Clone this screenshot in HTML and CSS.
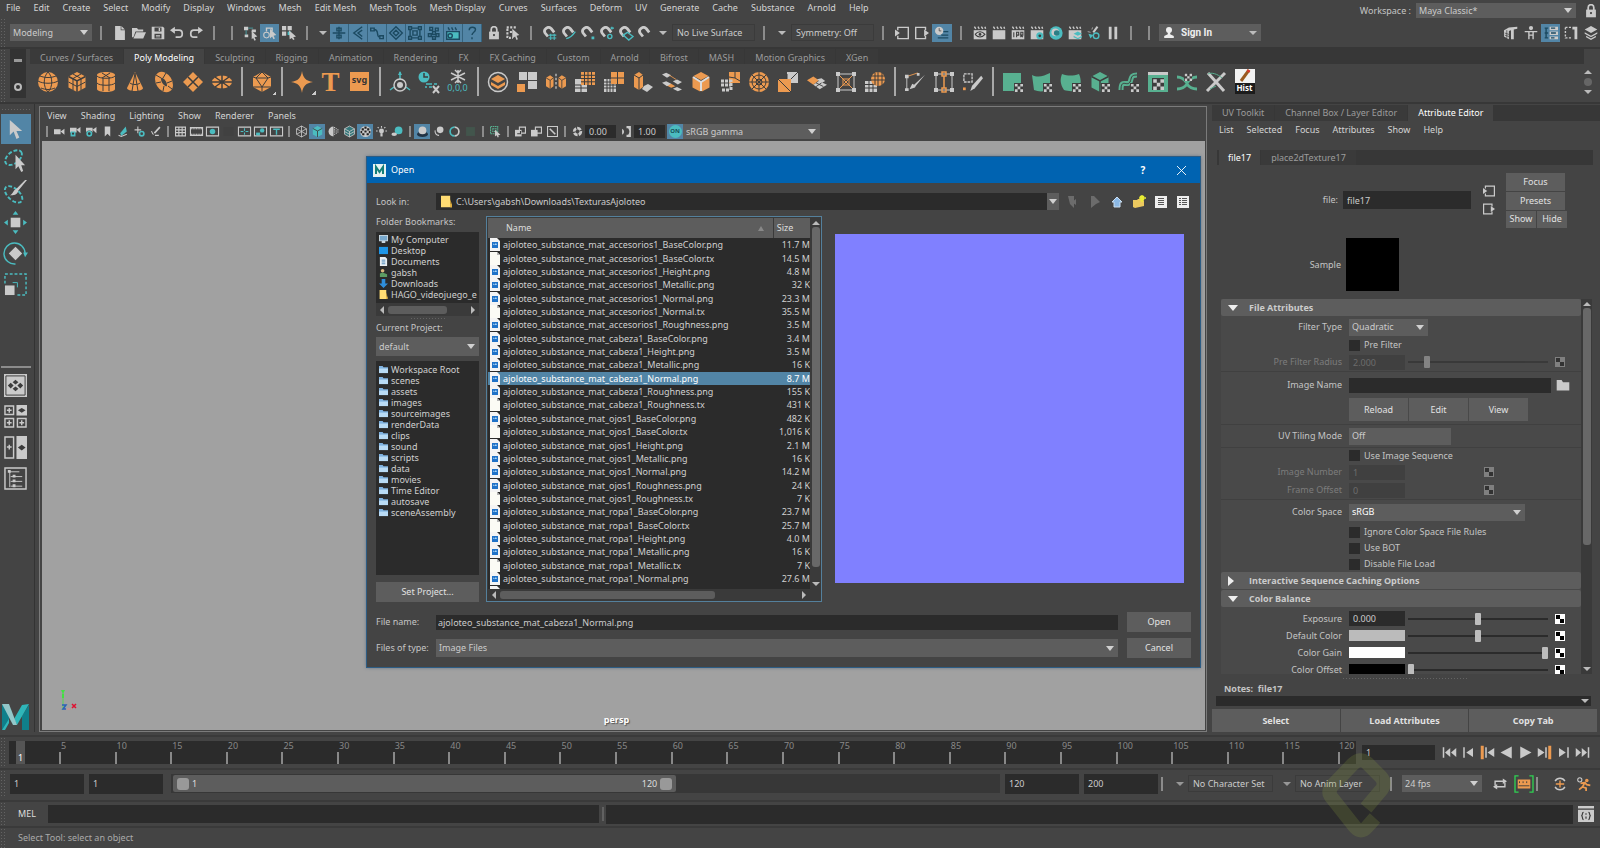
FILE: index.html
```html
<!DOCTYPE html>
<html lang="en">
<head>
    <meta charset="UTF-8">
    <meta name="viewport" content="width=device-width, initial-scale=1.0">
    <title>Maya</title>
    <link rel="stylesheet" href="styles.css">
</head>
<body>

<!-- shared icons -->
<svg class="defs" aria-hidden="true">
    <symbol id="cursor" viewBox="0 0 20 20"><path class="w" d="M4 0v16l4-4 3 8 3-1.500-3-7h6z"/></symbol>
    <symbol id="lock" viewBox="0 0 20 20"><path class="sw" stroke-width="2.500" d="M6 9V5a4 4 0 0 1 8 0v4"/><path class="w" d="M3 8h14v11H3z"/><circle class="k" cx="10" cy="13" r="1.500"/></symbol>
    <symbol id="magnet" viewBox="0 0 20 20"><path class="sw" stroke-width="4" d="M7 15 3 10C0 5 7-1 12 4l4 5"/></symbol>
    <symbol id="clap" viewBox="0 0 20 20"><path class="w" d="M1 6h18v13H1z"/><path class="sw" stroke-width="2" d="m2 1 2 3m3-3 2 3m3-3 2 3m3-3 1 3"/></symbol>
    <symbol id="cube" viewBox="0 0 20 20"><path d="M10 0 18.500 4.500v11L10 20l-8.500-4.500v-11z"/><path class="sk" stroke-width="1.500" d="M1.500 4.500 10 9l8.500-4.500M10 9v11"/></symbol>
    <symbol id="checker" viewBox="0 0 10 10"><path class="white" d="M0 0h10v10H0z"/><path class="black" d="M1 1h4v4H1zM5 5h4v4H5z"/></symbol>
    <symbol id="folder" viewBox="0 0 20 20"><path d="M1 3h7l2 3h9v12H1z"/></symbol>
    <symbol id="png" viewBox="0 0 10 13"><path fill="#f4f4f4" d="M0 0h7l3 3v10H0z"/><path fill="#1f72c8" d="M2 4h6v6H2z"/><path fill="#a9d4f5" d="m3 5 1 2 2-2 1 2H3z"/></symbol>
    <symbol id="tx" viewBox="0 0 10 13"><path fill="#fbfbf5" d="M0 0h7l3 3v10H0z"/><path fill="#b5b5b5" d="M7 0v3h3z"/></symbol>
    <symbol id="bluefolder" viewBox="0 0 10 10"><path fill="#7fb2e0" d="M0 1h4l1 1.500h5V9H0z"/><path fill="#b9dbf5" d="M0 4h10v5H0z"/></symbol>
    <symbol id="yellow" viewBox="0 0 12 13"><path fill="#ffdc73" d="M0 0h10v9l2 1v3H0z"/><path fill="#e0ad3c" d="M10 4v9h2v-3z"/></symbol>
    <symbol id="uv" viewBox="0 0 10 10"><path class="k" d="M0 0h10v10H0z"/><path class="w" d="M1 1h3v3H1zM7 1h3v3H7zM4 4h3v3H4zM1 7h3v3H1zM7 7h3v3H7z"/></symbol>
    <symbol id="inbox" viewBox="0 0 20 20"><path class="sw" stroke-width="2" d="M4 6V2h15v16H4v-4"/><path class="w" d="m0 5 7 5-7 5z"/></symbol>
    <symbol id="outbox" viewBox="0 0 20 20"><path class="sw" stroke-width="2" d="M15 6V2H1v16h14v-4"/><path class="w" d="m13 5 7 5-7 5z"/></symbol>
    <symbol id="camera" viewBox="0 0 20 20"><path class="w" d="M0 6h12v9H0zM12 10l7-5v11z"/></symbol>
</svg>

<header class="topbar">
    <nav class="menu">
        <a href="#">File</a><a href="#">Edit</a><a href="#">Create</a><a href="#">Select</a><a href="#">Modify</a><a href="#">Display</a><a href="#">Windows</a><a href="#">Mesh</a><a href="#">Edit Mesh</a><a href="#">Mesh Tools</a><a href="#">Mesh Display</a><a href="#">Curves</a><a href="#">Surfaces</a><a href="#">Deform</a><a href="#">UV</a><a href="#">Generate</a><a href="#">Cache</a><a href="#">Substance</a><a href="#">Arnold</a><a href="#">Help</a>
    </nav>
    <div class="workspace-pick">
        <label for="workspace">Workspace :</label>
        <span class="dd"><select id="workspace"><option>Maya Classic*</option></select></span>
        <button class="tool" aria-label="Lock workspace"><svg><use href="#lock"/></svg></button>
    </div>
</header>

<div class="status">
    <span class="grip"></span>
    <span class="dd mode"><select aria-label="Menu set"><option>Modeling</option></select></span>
    <span class="sep"></span>
    <button class="tool" aria-label="New scene"><svg viewBox="0 0 20 20"><path class="w" d="M3 0h8v6h6v14H3z"/><path class="w" d="m12 0 5 5h-5z"/></svg></button>
    <button class="tool" aria-label="Open scene"><svg viewBox="0 0 20 20"><path class="w" d="M0 3h7l2 2h7v3H5L2 16H0z"/><path class="w" d="M6 9h14l-4 9H2z"/></svg></button>
    <button class="tool" aria-label="Save scene"><svg viewBox="0 0 20 20"><path class="w" fill-rule="evenodd" d="M1 1h16l2 2v16H1zM5 2v6h10V2zM5 11v7h10v-7z"/><path class="w" d="M11 3h2v4h-2zM7 13h6v1H7zM7 15h6v1H7z"/></svg></button>
    <button class="tool" aria-label="Undo"><svg viewBox="0 0 20 20"><path class="sw" stroke-width="2.500" d="M4 6h9c6 0 6 10 0 10H8"/><path class="w" d="m0 6 7-5v10z"/></svg></button>
    <button class="tool" aria-label="Redo"><svg viewBox="0 0 20 20"><path class="sw" stroke-width="2.500" d="M16 6H7c-6 0-6 10 0 10h5"/><path class="w" d="m20 6-7-5v10z"/></svg></button>
    <span class="sep"></span>
    <span class="sep"></span>
    <button class="tool" aria-label="Select by hierarchy"><svg viewBox="0 0 20 20"><path class="w" d="M0 1h6v5H0zM11 5h6v4h-6zM1 12h5v4H1z"/><path class="st" d="M6 3h7M3 6v7"/><path class="w" d="m11 7 8 8-4 1 2 4-2 1-2-4-2 2z"/></svg></button>
    <button class="tool on" aria-label="Select by object"><svg viewBox="0 0 20 20"><circle class="sw" stroke-width="1.500" cx="5" cy="13" r="4"/><path class="sw" stroke-width="2" d="M5 8V3h8v4"/><path class="w" d="m10 4 9 9-4 1 2 4-2 1-2-4-3 3z"/></svg></button>
    <button class="tool" aria-label="Select by component"><svg viewBox="0 0 20 20"><path class="w" d="M0 0h6v6H0zM8 0h6v6H8zM0 8h6v6H0z"/><path class="t" d="M8 8h5v5H8z"/><path class="w" d="m10 6 10 9-4 1 2 3-2 1-2-3-3 2z"/></svg></button>
    <span class="sep"></span>
    <span class="caret small"></span>
    <div class="masks">
        <button class="tool on" aria-label="Handles"><svg viewBox="0 0 20 20"><path class="sn" d="M10 1v18M1 10h18M7 3h6v4H7zM7 13h6v4H7z"/></svg></button>
        <button class="tool on" aria-label="Joints"><svg viewBox="0 0 20 20"><path class="sn" d="M16 1 4 10l12 9M16 6l-6 4 6 5"/></svg></button>
        <button class="tool on" aria-label="Curves"><svg viewBox="0 0 20 20"><path class="sn" d="M1 3h5v4H1zM14 14h5v4h-5zM6 5c8 0 2 11 8 11"/></svg></button>
        <button class="tool on" aria-label="Surfaces"><svg viewBox="0 0 20 20"><path class="sn" d="m10 1 9 9-9 9-9-9zM10 6l4 4-4 4-4-4z"/></svg></button>
        <button class="tool on" aria-label="Deformers"><svg viewBox="0 0 20 20"><path class="sn" d="M1 1h4v4H1zM15 1h4v4h-4zM1 15h4v4H1zM15 15h4v4h-4zM5 3h10M5 17h10M3 5v10M17 5v10M7 7h6v6H7z"/></svg></button>
        <button class="tool on" aria-label="Dynamics"><svg viewBox="0 0 20 20"><path class="sn" d="M4 2h4v4H4zM12 3h4v4h-4zM8 8h4v4H8zM2 11h4v4H2zM13 11h4v4h-4zM8 15h4v4H8z"/></svg></button>
        <button class="tool on" aria-label="Rendering"><svg viewBox="0 0 20 20"><path class="t" d="M1 8h18v11H1z"/><path class="sn" d="M1 8h18v11H1zM3 2l2 4m3-4 2 4m3-4 2 4"/><circle class="sn" cx="6" cy="14" r="3"/></svg></button>
        <button class="tool on" aria-label="Miscellaneous"><svg viewBox="0 0 20 20"><path class="sn" d="M6 6c0-6 9-5 9-1 0 4-5 4-5 8M10 16v3"/></svg></button>
    </div>
    <button class="tool" aria-label="Lock selection"><svg><use href="#lock"/></svg></button>
    <button class="tool" aria-label="Highlight selection"><svg viewBox="0 0 20 20"><path class="sw" stroke-width="3" stroke-dasharray="3 2" d="M1 2h14M2 4v13h8M7 7v5"/><path class="w" d="m9 4 10 9-4 1 2 5-2 1-2-5-4 3z"/></svg></button>
    <span class="sep"></span>
    <button class="tool" aria-label="Snap to grids"><svg viewBox="0 0 20 20"><use href="#magnet"/><path class="st" stroke-width="1.500" d="M11 11v9M16 11v9M8 13h11M8 17h11"/></svg></button>
    <button class="tool" aria-label="Snap to curves"><svg viewBox="0 0 20 20"><use href="#magnet"/><path class="st" stroke-width="2" d="M6 18c6-1 9-4 13-10"/></svg></button>
    <button class="tool" aria-label="Snap to points"><svg viewBox="0 0 20 20"><use href="#magnet"/><path class="t" d="M15 15h4v4h-4z"/></svg></button>
    <button class="tool" aria-label="Snap to projected center"><svg viewBox="0 0 20 20"><use href="#magnet"/><circle class="st" stroke-width="2" cx="14" cy="15" r="3"/><path class="st" stroke-width="2" d="M17 1v4M20 3h-5"/></svg></button>
    <button class="tool" aria-label="Snap to view planes"><svg viewBox="0 0 20 20"><use href="#magnet"/><path class="st" stroke-width="2" d="m6 13 6-4 8 6-6 5z"/></svg></button>
    <button class="tool" aria-label="Make live"><svg><use href="#magnet"/></svg></button>
    <span class="caret"></span>
    <button class="box">No Live Surface</button>
    <span class="sep"></span>
    <span class="caret"></span>
    <button class="box">Symmetry: Off</button>
    <span class="sep"></span>
    <button class="tool wide" aria-label="Inputs"><svg><use href="#inbox"/></svg></button>
    <button class="tool wide" aria-label="Outputs"><svg><use href="#outbox"/></svg></button>
    <button class="tool wide on" aria-label="Construction history"><svg viewBox="0 0 20 20"><circle class="w" cx="6" cy="7" r="6"/><path class="sk" d="M6 3v4h3"/><path class="sn" stroke-width="2" d="M12 8h7M9 13h10M4 17h15"/></svg></button>
    <span class="sep"></span>
    <button class="tool" aria-label="Render view"><svg viewBox="0 0 20 20"><use href="#clap"/><path class="sk" stroke-width="1.500" d="M3 12c4-5 10-5 14 0-4 5-10 5-14 0"/><circle class="k" cx="10" cy="12" r="2"/></svg></button>
    <button class="tool" aria-label="Render frame"><svg><use href="#clap"/></svg></button>
    <button class="tool" aria-label="IPR render"><svg viewBox="0 0 20 20"><use href="#clap"/><path class="sk" stroke-width="1.500" d="M4 9v7M8 16V9h3v4H8M14 16V9h3v4h-3l3 3"/></svg></button>
    <button class="tool" aria-label="Render settings"><svg viewBox="0 0 20 20"><use href="#clap"/><circle class="t" cx="14" cy="14" r="5"/><circle class="k" cx="14" cy="14" r="2"/></svg></button>
    <button class="tool" aria-label="Hypershade"><svg viewBox="0 0 20 20"><circle class="t" cx="10" cy="10" r="9.500"/><circle class="w" cx="9" cy="9" r="5.500"/><circle fill="#2b7f86" cx="11" cy="10" r="4"/></svg></button>
    <button class="tool" aria-label="Render setup"><svg viewBox="0 0 20 20"><use href="#clap"/><path class="t" d="m14 8 6 3-6 3-6-3zM8 14l6 3 6-3v2l-6 3-6-3z"/></svg></button>
    <button class="tool" aria-label="Light editor"><svg viewBox="0 0 20 20"><path class="sw" stroke-width="3" d="m9 9 6-8"/><path class="sw" d="m1 8 4 1M8 2l-1 3"/><circle class="st" stroke-width="2" cx="13" cy="14" r="4"/><path class="t" d="m2 11 7 2-4 5z"/></svg></button>
    <button class="tool" aria-label="Pause"><svg viewBox="0 0 20 20"><path class="w" d="M4 1h4v18H4zM12 1h4v18h-4z"/></svg></button>
    <span class="sep"></span>
    <span class="sep"></span>
    <button class="signin"><svg viewBox="0 0 20 20"><circle cx="10" cy="6" r="5"/><path d="M8 9h4v4l6 3v3H2v-3l6-3z"/></svg>Sign In<span class="caret"></span></button>
    <div class="status-end">
        <button class="tool" aria-label="Modeling toolkit"><svg viewBox="0 0 20 20"><path class="w" d="m0 6 7-4 12-1v3l-5 1v14h-4V6l-3 1v12l-7-4z"/><path class="sk" d="M1 10l6 2M1 13l6 2M4 6v11"/></svg></button>
        <button class="tool" aria-label="Character controls"><svg viewBox="0 0 20 20"><circle class="w" cx="10" cy="3" r="3"/><path class="sw" stroke-width="2" d="M1 8h18M7 8v11M13 8v11M7 13h6"/></svg></button>
        <button class="tool on" aria-label="Attribute editor"><svg viewBox="0 0 20 20"><path class="w" d="M8 1h12v5H8zM8 8h12v5H8zM8 15h12v4H8z"/><path class="sn" d="M1 3h5M1 10h5M1 17h5M3 3v14M10 3h6M10 10h7M10 17h5"/></svg></button>
        <button class="tool" aria-label="Tool settings"><svg viewBox="0 0 20 20"><path class="sw" stroke-width="2" stroke-dasharray="3 2" d="M2 2v16M2 2h9M2 17h10"/><path class="w" d="M12 1h7v18h-4V5h-3z"/></svg></button>
        <button class="tool" aria-label="Channel box"><svg viewBox="0 0 20 20"><path class="w" d="m10 0 9 5-9 5-9-5zM1 9l9 5 9-5v2l-9 5-9-5zM3 14l7 4 7-4v2l-7 4-7-4z"/></svg></button>
    </div>
</div>

<section class="shelf">
    <span class="grip"></span>
    <div class="shelf-side"><span class="bar"></span><span class="ring"></span></div>
    <div class="shelf-main">
        <div class="tabs" role="tablist">
            <button role="tab">Curves / Surfaces</button><button role="tab" class="active">Poly Modeling</button><button role="tab">Sculpting</button><button role="tab">Rigging</button><button role="tab">Animation</button><button role="tab">Rendering</button><button role="tab">FX</button><button role="tab">FX Caching</button><button role="tab">Custom</button><button role="tab">Arnold</button><button role="tab">Bifrost</button><button role="tab">MASH</button><button role="tab">Motion Graphics</button><button role="tab">XGen</button>
        </div>
        <div class="shelf-icons">
            <button aria-label="Sphere"><svg viewBox="0 0 20 20"><circle class="o" cx="10" cy="10" r="10"/><path class="sk" d="M0 9c5 3 15 3 20 0M2 4c5 2 11 2 16 0M3 16c5 2 9 2 14 0M10 0c-5 5-5 15 0 20M10 0c5 5 5 15 0 20"/></svg></button>
            <button aria-label="Cube"><svg class="o" viewBox="0 0 20 20"><use href="#cube"/><path class="sk" d="M1.500 10 10 14.500 18.500 10M6 2l8 4.500V18M14 2 6 6.500V18"/></svg></button>
            <button aria-label="Cylinder"><svg viewBox="0 0 20 20"><path class="o" d="M1 3c0-4 18-4 18 0v14c0 4-18 4-18 0z"/><path class="sk" d="M1 4c2 3 16 3 18 0M1 11c2 3 16 3 18 0M7 6v13M13 6v13M6 1l8 5M14 1 6 6"/></svg></button>
            <button aria-label="Cone"><svg viewBox="0 0 20 20"><path class="o" d="m10 0 8 16c0 4-16 4-16 0z"/><path class="sk" d="M10 1 7 19M10 1l3 18M5 11c2 2 8 2 10 0"/></svg></button>
            <button aria-label="Torus"><svg viewBox="0 0 20 20"><ellipse fill="none" stroke="#ec9a50" stroke-width="6" cx="10" cy="10" rx="5" ry="8" transform="rotate(-32 10 10)"/><path class="sk" d="m2 3 5 3M12 1 9 6M18 9l-5 2M2 11l5-1M9 19l1-5M18 17l-4-3"/></svg></button>
            <button aria-label="Plane"><svg viewBox="0 0 20 20"><path class="o" d="m10 0 10 10-10 10L0 10z"/><path class="sk" stroke-width="1.500" d="m5 5 10 10M15 5 5 15"/></svg></button>
            <button aria-label="Disc"><svg viewBox="0 0 20 20"><ellipse class="o" cx="10" cy="10" rx="10" ry="6.500"/><path class="sk" stroke-width="1.500" d="M10 3v14M0 10h20M3 5l14 10M17 5 3 15"/><circle class="k" cx="10" cy="10" r="1.500"/></svg></button>
            <span class="divider"></span>
            <button class="more" aria-label="Platonic solid"><svg viewBox="0 0 20 20"><path class="o" d="m10 0 9 5v10l-9 5-9-5V5z"/><path class="sk" d="m4 6 6 9 6-9zM1 5l3 1M19 5l-3 1M10 15v5M1 15l9 0 9 0M10 0 4 6M10 0l6 6"/></svg></button>
            <span class="divider"></span>
            <button class="more" aria-label="Super shape"><svg viewBox="0 0 20 20"><path class="o" d="M10-1c1 7 4 10 11 11-7 1-10 4-11 11C9 14 6 11-1 10c7-1 10-4 11-11z"/></svg></button>
            <button class="type" aria-label="Type">T</button>
            <button class="svgtool"><span>svg</span></button>
            <span class="divider"></span>
            <button aria-label="Center pivot"><svg viewBox="0 0 20 20"><path class="st" stroke-width="1.500" d="M10 0v8M4 15l-4 3M16 15l4 3"/><path class="t" d="m10-1 2 4H8z"/><circle class="sw" stroke-width="1.500" cx="10" cy="13" r="6"/><circle class="w" cx="10" cy="13" r="3"/></svg></button>
            <button aria-label="Delete history"><svg viewBox="0 0 20 20"><circle class="t" cx="5" cy="5" r="5.500"/><path class="sk" stroke-width="1.500" d="M5 1v4h4"/><path class="st" stroke-width="1.500" d="M7 12h6M15 12h3M10 15h3M6 15h2"/><path class="sw" stroke-width="2" d="m14 14 6 7M20 14l-6 7"/></svg></button>
            <button class="freeze" aria-label="Freeze transformations"><svg viewBox="0 0 20 13"><path class="sw" stroke-width="1.500" d="M10 0v13M3 3l14 7M17 3 3 10M7 0l3 3 3-3M7 13l3-3 3 3"/></svg><span>0,0,0</span></button>
            <span class="divider"></span>
            <button aria-label="Combine"><svg viewBox="0 0 20 20"><circle class="sw" stroke-width="1.500" cx="10" cy="10" r="9.500"/><path class="o" d="m10 3 7 4-7 4-7-4zM3 10l7 4 7-4v3l-7 4-7-4z"/></svg></button>
            <button aria-label="Separate"><svg viewBox="0 0 20 20"><path class="w" d="M2 0h8v8H2zM11 0h9v8h-9zM11 9h9v8h-9z"/><path class="o" d="M0 12h8v8H0z"/></svg></button>
            <button aria-label="Mirror"><svg viewBox="0 0 24 20"><path class="o" d="m0 5 5-3 4 3v10l-4 3-5-3zM15 5l4-3 5 3v10l-5 3-4-3z"/><path class="sk" d="m0 5 5 3 4-3M5 8v10M15 5l4 3 5-3M19 8v10"/><path class="sw" stroke-width="1.500" stroke-dasharray="3 2" d="M12 0v20"/></svg></button>
            <button aria-label="Smooth"><svg viewBox="0 0 20 20"><path class="w" d="M0 7h12v13H0z"/><path class="o" d="M6 0h14v13H6z"/><path class="sk" d="M9.500 0v13M13 0v13M16.500 0v13M6 3.300h14M6 6.500h14M6 9.800h14M6 13v7M0 13h6M0 16h12"/></svg></button>
            <button aria-label="Reduce"><svg viewBox="0 0 20 20"><path class="w" d="M0 7h12v13H0z"/><path class="sk" d="M3 7v13M6 7v13M9 7v13M0 10h12M0 13h12M0 16h12"/><path class="o" d="M7 0h13v12H7z"/><path class="sk" d="M13.500 0v12M7 6h13"/></svg></button>
            <button aria-label="Extrude"><svg viewBox="0 0 20 20"><path class="o" d="m1 3 5-3 4 3v12l-4 3-5-3z"/><path class="sk" d="m1 3 5 3 4-3M6 6v12"/><path class="w" d="m11 14 4-2 5 3-6 5-5-3z"/></svg></button>
            <button aria-label="Bridge"><svg viewBox="0 0 24 22"><path class="w" d="m0 2 5-2 6 3-5 3zM13 10l5-2 6 3-5 3zM13 19l5-2 6 3-5 2z"/><path class="o" d="m5 15 6-2 5 3-5 2z"/><path class="so" d="m9 3 8 5"/><path class="w" d="m0 12 5-2 6 3-5 3z"/></svg></button>
            <button aria-label="Bevel"><svg class="o" viewBox="0 0 20 20"><use href="#cube"/><path stroke="#ddd" stroke-width="2" fill="none" d="m2 5 8 5 8-5M10 10v9"/></svg></button>
            <button aria-label="Merge"><svg viewBox="0 0 20 20"><path class="o" d="M9 0h11v11H9z"/><path class="sk" d="m9 5 6 1V0M15 6l5 3"/><path class="sw" stroke-width="3" stroke-dasharray="3 1" d="M1 9h10v10M1 13h10M2 18h8"/></svg></button>
            <button aria-label="Circularize"><svg viewBox="0 0 20 20"><circle class="o" cx="10" cy="10" r="10"/><circle class="sk" cx="10" cy="10" r="7"/><circle class="sk" cx="10" cy="10" r="3"/><path class="sk" d="M10 0v20M0 10h20M3 3l14 14M17 3 3 17"/></svg></button>
            <button aria-label="Fill hole"><svg viewBox="0 0 20 20"><path class="w" d="M9 0h11v11H9z"/><path class="o" d="M0 7h13v13H0z"/><path class="sk" d="m0 7 13 13M13 7l7-7M9 7V2"/></svg></button>
            <button aria-label="Multi-cut"><svg viewBox="0 0 22 20"><path class="o" d="m0 8 7-4 6 4-6 5z"/><path class="w" d="m7 13 6-4 9 4-8 5zM11 7l5-1 4 3-4 2z"/><path class="sk" d="m10 11 8 4M10 15l6-4"/></svg></button>
            <button aria-label="Lattice"><svg viewBox="0 0 20 20"><path class="sw" d="M2 2h16v16H2z"/><path class="so" d="m3 3 14 14M17 3 3 17M7 7h6v6H7z"/><path class="w" d="M0 0h4v4H0zM16 0h4v4h-4zM0 16h4v4H0zM16 16h4v4h-4z"/></svg></button>
            <button aria-label="Shrink wrap"><svg viewBox="0 0 20 20"><path class="w" d="M0 9h12v11H0z"/><path class="sk" d="M4 9v11M8 9v11M0 12.500h12M0 16h12"/><circle class="o" cx="13" cy="7" r="7"/><path class="sk" d="M10 1v12M13 0v14M17 1v12M6 4h14M6 8h14"/></svg></button>
            <span class="divider"></span>
            <button aria-label="Create polygon"><svg viewBox="0 0 22 20"><path class="so" d="m2 4 12-4"/><path class="sw" d="M2 5v13"/><path class="w" d="M0 2h4v4H0zM0 17h4v3H0zM13 0h3v3h-3zM22 2 10 13l-2-1-3 6 6-2 1-2z"/></svg></button>
            <button aria-label="Insert edge loop"><svg viewBox="0 0 20 20"><path class="sw" d="M2 2h16v16H2z"/><path class="w" d="M0 0h4v4H0zM16 0h4v4h-4zM0 16h4v4H0zM16 16h4v4h-4z"/><path class="so" stroke-width="1.500" d="M10 4v12M8 0h4v4H8zM8 16h4v4H8z"/></svg></button>
            <button aria-label="Quad draw"><svg viewBox="0 0 22 20"><path class="sw" stroke-width="1.500" stroke-dasharray="3 1" d="M1 1h9v9H1z"/><path class="w" d="m20 3 2 3-9 11-5 3 2-6z"/><path class="o" d="M0 16h3v3H0z"/></svg></button>
            <span class="divider"></span>
            <button aria-label="Planar map"><svg viewBox="0 0 20 20"><path class="g" d="M0 1h18v18H0z"/><use href="#uv" x="11" y="11" width="9" height="9"/></svg></button>
            <button aria-label="Cylindrical map"><svg viewBox="0 0 20 20"><path class="g" d="M0 3c6 3 12 1 18-2v16c-6 3-11 3-16 1z"/><use href="#uv" x="11" y="11" width="9" height="9"/></svg></button>
            <button aria-label="Spherical map"><svg viewBox="0 0 20 20"><path class="g" d="M1 2c6 2 11 2 17 0 3 7 2 12-2 16-5 2-9 1-13 0C-1 12-1 7 1 2z"/><use href="#uv" x="11" y="11" width="9" height="9"/></svg></button>
            <button aria-label="Automatic map"><svg class="g" viewBox="0 0 20 20"><use href="#cube"/><use href="#uv" x="11" y="11" width="9" height="9"/></svg></button>
            <button aria-label="Contour stretch"><svg viewBox="0 0 20 20"><path class="sg" stroke-width="5" d="M2 18C2 6 8 15 11 10 13 6 11 3 18 3"/><path class="sk" d="M2 18C2 6 8 15 11 10 13 6 11 3 18 3"/><use href="#uv" x="11" y="11" width="9" height="9"/></svg></button>
            <button aria-label="UV editor"><svg viewBox="0 0 20 20"><path class="g" d="M0 0h20v20H0z"/><path class="w" d="M0 0h20v3H0z"/><use href="#uv" x="4" y="6" width="12" height="12"/></svg></button>
            <button aria-label="Cut and sew"><svg viewBox="0 0 20 20"><path class="sg" stroke-width="3" d="M0 5c5 0 8 3 10 6 2-3 5-6 10-6M0 17c5 0 8-2 10-5 2 3 5 5 10 5"/><use href="#uv" x="7" y="1" width="8" height="8"/></svg></button>
            <button aria-label="Sew tool"><svg viewBox="0 0 20 20"><path class="sw" stroke-width="3" d="m2 1 16 18M19 1 1 19"/><path class="sg" d="M2 2c3-2 10 0 14 4M4 17l6-3"/></svg></button>
            <button class="hist" aria-label="History"><svg viewBox="0 0 20 14"><path fill="#f2f2f2" d="M0 0h20v14H0z"/><path stroke="#9a5a20" stroke-width="3" d="m6 12 8-11"/><path stroke="#d9382c" stroke-width="3" d="m13 3 1-2"/></svg><span>Hist</span></button>
        </div>
    </div>
    <div class="shelf-scroll"><span class="up"></span><span class="dot"></span><span class="caret"></span></div>
</section>

<main>
    <aside class="toolbox">
        <span class="hgrip"></span>
        <button class="on" aria-label="Select tool"><svg viewBox="0 0 20 20"><use href="#cursor"/></svg></button>
        <button aria-label="Lasso tool"><svg viewBox="0 0 24 24"><ellipse class="st" stroke-width="2" stroke-dasharray="4 2" cx="10" cy="9" rx="10" ry="6" transform="rotate(-38 10 9)"/><path class="w" d="M12 6v15l3-3 3 6 2-1-2-6h4z"/></svg></button>
        <button aria-label="Paint select tool"><svg viewBox="0 0 24 24"><ellipse class="st" stroke-width="2" stroke-dasharray="4 2" cx="10" cy="15" rx="11" ry="6" transform="rotate(42 10 15)"/><path class="w" d="M24 0 15 11c-1 5-5 5-9 5 4-2 3-5 7-7L22 0z"/></svg></button>
        <button aria-label="Move tool"><svg viewBox="0 0 24 24"><path class="w" d="M7 7h10v10H7z"/><path class="t" d="m12 0 3 4H9zM12 24l3-4H9zM0 12l4-3v6zM24 12l-4-3v6z"/></svg></button>
        <button aria-label="Rotate tool"><svg viewBox="0 0 24 24"><path class="st" stroke-width="1.500" d="M12 23A11 11 0 1 1 22 12"/><path class="w" d="m12 5 7 7-7 7-7-7z"/><path class="t" d="M20 11h5l-3 5z"/></svg></button>
        <button aria-label="Scale tool"><svg viewBox="0 0 24 24"><path class="st" stroke-width="1.500" stroke-dasharray="3 2" d="M1 11V1h22v22H12"/><path class="st" d="M9 10h5v5"/><path class="w" d="M1 13h10v10H1z"/></svg></button>
        <hr>
        <button aria-label="Single perspective view"><svg viewBox="0 0 24 24"><path class="w" d="M0 0h24v24H0z"/><path class="sk" d="M2 2h20v20H2z"/><path class="k" d="m12 6 3 2.500-3 2.500-3-2.500zM12 13l3 2.500-3 2.500-3-2.500zM7 9l3 3-3 3-3-3zM17 9l3 3-3 3-3-3z"/></svg></button>
        <button aria-label="Four view"><svg viewBox="0 0 24 24"><path class="w" d="M13 0h11v11H13z"/><path class="sw" stroke-width="1.500" d="M1 1h9v9H1zM1 14h9v9H1zM14 14h9v9h-9zM5.500 3v5M3 5.500h5M5.500 16v5M3 18.500h5M18.500 16v5M16 18.500h5"/><path class="k" d="m18.500 3 4 2.500-4 2.500-4-2.500z"/></svg></button>
        <button aria-label="Two view"><svg viewBox="0 0 24 24"><path class="w" d="M13 0h11v24H13z"/><path class="sw" stroke-width="1.500" d="M1 1h9v22H1zM5.500 9v5M3 11.500h5"/><path class="k" d="m18.500 9 4 3-4 3-4-3z"/></svg></button>
        <button aria-label="Outliner view"><svg viewBox="0 0 24 24"><path class="sw" stroke-width="1.500" d="M1 1h22v22H1z"/><path class="sw" d="M6 4v17M6 5h10M7 10h12M7 15h12M7 20h12"/><path class="w" d="M4 3h3v3H4zM9 8h3v3H9zM9 13h3v3H9zM9 18h3v3H9z"/></svg></button>
        <svg class="logo" viewBox="0 0 27 26"><path fill="#0f7f8a" d="M0 26V1l7 0v17zM20 26V12l7-11v25z"/><path fill="#2fb6b9" d="M0 26 7 15v4l-4 7zM27 0 15 21l-3-6L20 1z"/><path fill="#93c7c9" d="M0 0h7l8 21h-4z"/></svg>
    </aside>

    <section class="panel">
        <nav class="menu panel-menu"><a href="#">View</a><a href="#">Shading</a><a href="#">Lighting</a><a href="#">Show</a><a href="#">Renderer</a><a href="#">Panels</a></nav>
        <div class="panel-bar">
            <span class="sep"></span>
            <button aria-label="Select camera"><svg><use href="#camera"/></svg></button>
            <button aria-label="Lock camera"><svg viewBox="0 0 20 20"><use href="#camera" y="-3"/><path class="t" d="M1 10h9v9H1z"/><circle class="k" cx="5.500" cy="14" r="2"/></svg></button>
            <button aria-label="Camera attributes"><svg viewBox="0 0 20 20"><use href="#camera" y="-3"/><circle class="k" cx="6" cy="14" r="6"/><circle class="st" stroke-width="3" cx="6" cy="14" r="4"/></svg></button>
            <button aria-label="Bookmarks"><svg viewBox="0 0 20 20"><path class="w" d="M5 1h10v18l-5-5-5 5z"/></svg></button>
            <button aria-label="Image plane"><svg viewBox="0 0 20 20"><path class="t" d="m14 1 2 9-10 8-2-5z"/><path class="sw" stroke-width="2" d="m1 17 5 2 10-4"/></svg></button>
            <button aria-label="Pan zoom"><svg viewBox="0 0 20 20"><path class="sw" stroke-width="2" d="M7 1v12M1 7h12"/><circle class="st" stroke-width="3" cx="14" cy="14" r="4"/></svg></button>
            <button aria-label="Grease pencil"><svg viewBox="0 0 20 20"><path class="sw" stroke-width="3" d="M18 2 8 13"/><path class="sw" stroke-width="2" d="M2 10c4 0 0 5 5 5M9 17h7"/></svg></button>
            <span class="sep"></span>
            <button aria-label="Grid"><svg viewBox="0 0 20 20"><path class="sw" stroke-width="2" d="M1 2h18v16H1zM1 7h18M1 12h18M7 2v16M13 2v16"/></svg></button>
            <button aria-label="Film gate"><svg viewBox="0 0 20 20"><path class="sw" stroke-width="2" d="M-1 3h22v14H-1z"/><path class="sw" stroke-width="2" stroke-dasharray="2 1" d="M0 5h20M0 15h20"/></svg></button>
            <button aria-label="Resolution gate"><svg viewBox="0 0 20 20"><path class="sw" stroke-width="2" d="M-1 2h22v16H-1z"/><circle class="t" cx="10" cy="10" r="5"/></svg></button>
            <button class="dim" aria-label="Gate mask"><svg viewBox="0 0 20 20"><path class="k" d="M1 2h18v16H1z"/></svg></button>
            <button aria-label="Field chart"><svg viewBox="0 0 20 20"><path class="sw" stroke-width="2" d="M-1 2h22v16H-1z"/><path class="st" stroke-width="2" d="M10 4v5M10 12v4M3 10h5M12 10h5"/></svg></button>
            <button aria-label="Safe action"><svg viewBox="0 0 20 20"><path class="sw" stroke-width="2" d="M-1 2h22v16H-1z"/><circle class="t" cx="13" cy="8" r="4"/><path class="t" d="M2 12h7v5H2z"/></svg></button>
            <button aria-label="Safe title"><svg viewBox="0 0 20 20"><path class="sw" stroke-width="2" d="M-1 2h22v16H-1z"/><path class="st" stroke-width="2.500" d="M4 6h12M10 6v10"/></svg></button>
            <span class="sep"></span>
            <button aria-label="Wireframe"><svg viewBox="0 0 20 20"><path class="sw" stroke-width="1.500" d="m10 0 9 5v10l-9 5-9-5V5zM1 5l9 5 9-5M10 0v20M1 15l9-5 9 5"/></svg></button>
            <button class="on" aria-label="Smooth shade"><svg class="t" viewBox="0 0 20 20"><use href="#cube"/></svg></button>
            <button aria-label="Default material"><svg viewBox="0 0 20 20"><path class="w" d="M10 1a9 9 0 0 0 0 18z"/><path class="sw" stroke-width="2" stroke-dasharray="2 2" d="M12 2v16M15 4v12M18 6v8"/></svg></button>
            <button aria-label="Wireframe on shaded"><svg viewBox="0 0 20 20"><path fill="#35777a" d="m10 0 9 5v10l-9 5-9-5V5z"/><path class="sw" stroke-width="1.500" d="m10 0 9 5v10l-9 5-9-5V5zM1 5l9 5 9-5M10 10v10M1 10l9 5 9-5"/></svg></button>
            <button class="on" aria-label="Textured"><svg viewBox="0 0 20 20"><circle class="w" cx="10" cy="10" r="10"/><path fill="#222" d="M8 1h4v4H8zM3 4h4v4H3zM13 4h4v4h-4zM8 8h4v4H8zM1 9h3v4H1zM16 9h3v4h-3zM4 13h4v4H4zM12 13h4v4h-4z"/></svg></button>
            <button aria-label="Use all lights"><svg viewBox="0 0 20 20"><circle class="w" cx="10" cy="9" r="4.500"/><path class="w" d="M8 13h4v6H8z"/><path class="sw" stroke-width="2" d="M10 0v3M0 9h3M17 9h3M3 2l2 2M17 2l-2 2"/></svg></button>
            <button aria-label="Shadows"><svg viewBox="0 0 20 20"><circle class="t" cx="12" cy="8" r="7"/><ellipse class="w" cx="4" cy="15" rx="5" ry="3"/></svg></button>
            <span class="sep"></span>
            <button class="on" aria-label="Ambient occlusion"><svg viewBox="0 0 20 20"><ellipse fill="#234" cx="10" cy="15" rx="10" ry="5"/><circle class="w" cx="10" cy="8" r="7"/></svg></button>
            <button aria-label="Motion blur"><svg viewBox="0 0 20 20"><circle class="w" cx="13" cy="7" r="6"/><path class="sw" stroke-width="2" d="M4 8a7 7 0 0 0 7 9"/></svg></button>
            <button aria-label="Anti-aliasing"><svg viewBox="0 0 20 20"><path class="sw" stroke-width="3" d="M10 2a8 8 0 0 1 0 16"/><path class="st" stroke-width="3" d="M10 2a8 8 0 0 0 0 16"/></svg></button>
            <button class="dim" aria-label="Depth of field"><svg viewBox="0 0 20 20"><path fill="#3f7d60" d="M2 2h16v16H2z"/></svg></button>
            <span class="sep"></span>
            <button aria-label="Isolate select"><svg viewBox="0 0 20 20"><path class="sg" stroke-width="2" stroke-dasharray="3 1" d="M1 1h13v13H1zM5 5h6v5H5z"/><path class="w" d="m9 7 10 9-4 1 1 3-2 1-2-4-3 2z"/></svg></button>
            <span class="sep"></span>
            <button aria-label="X-ray"><svg viewBox="0 0 20 20"><path class="w" d="M0 7h12v12H0z"/><path class="sw" stroke-width="2" d="M8 2h11v11H8z"/><path class="sk" stroke-width="2" d="M4 14h6V9"/></svg></button>
            <button aria-label="X-ray active"><svg viewBox="0 0 20 20"><path class="sw" stroke-width="2" d="M8 2h11v11H8z"/><path class="w" d="M0 7h12v12H0z"/></svg></button>
            <button aria-label="X-ray joints"><svg viewBox="0 0 20 20"><path class="sw" stroke-width="2" d="M1 1h18v18H1z"/><path class="sw" stroke-width="3" d="m5 5 10 10"/></svg></button>
            <span class="sep"></span>
            <button aria-label="Exposure"><svg viewBox="0 0 20 20"><circle class="sw" stroke-width="5" stroke-dasharray="7 2" cx="10" cy="10" r="6"/></svg></button>
            <input type="text" value="0.00" aria-label="Exposure value">
            <button aria-label="Gamma"><svg viewBox="0 0 20 20"><path class="w" d="M2 5a6 6 0 0 1 0 11zM10 0h8v20h-8v-4h3a10 10 0 0 0 0-12h-3z"/></svg></button>
            <input type="text" value="1.00" aria-label="Gamma value">
            <button class="on" aria-label="View transform"><span class="on-badge">ON</span></button>
            <span class="dd gamma"><select aria-label="Color transform"><option>sRGB gamma</option></select></span>
        </div>
        <div class="viewport">
            <svg class="axis" viewBox="0 0 20 24"><path stroke="#54d354" fill="none" d="M4 3v17"/><path fill="#42e142" d="M2 0h4L4 4zM3 4h2v4H3z"/><path stroke="#df8a8a" stroke-dasharray="3 1" d="M4 19h9"/><path stroke="#e01030" stroke-width="1.500" d="m13 14 4 4M17 14l-4 4"/><path stroke="#2b62b9" stroke-width="1.500" fill="none" d="M3 15h4l-3 4h3"/></svg>
            <span class="cam">persp</span>
        </div>

        <div class="dialog" role="dialog" aria-label="Open">
            <div class="titlebar">
                <svg viewBox="0 0 13 13"><path fill="#e5f1f1" d="M0 0h13v13H0z"/><path stroke="#137f79" stroke-width="2" fill="none" d="M3 10V3l3.500 5L10 3v7"/></svg>
                <span>Open</span>
                <button class="help">?</button>
                <button aria-label="Close"><svg viewBox="0 0 10 10"><path stroke="#fff" d="m0 0 10 10M10 0 0 10"/></svg></button>
            </div>
            <div class="dialog-body">
                <div class="lookin">
                    <label for="lookin">Look in:</label>
                    <span class="path"><svg viewBox="0 0 12 13"><use href="#yellow"/></svg><span class="dd"><select id="lookin"><option>C:\Users\gabsh\Downloads\TexturasAjoloteo</option></select></span></span>
                    <div class="look-tools">
                        <button class="dim" aria-label="Back"><svg viewBox="0 0 12 12"><path class="w" d="M1 0h6v12l-4-4zM5 6l4-3v6z"/></svg></button>
                        <button class="dim" aria-label="Forward"><svg viewBox="0 0 12 12"><path class="w" d="M2 0h3l6 6-4 2-5 4z"/></svg></button>
                        <button aria-label="Parent directory"><svg viewBox="0 0 12 12"><path fill="#8cb9e6" stroke="#c9def2" d="m6 1 5 5H9v5H3V6H1z"/></svg></button>
                        <button aria-label="New folder"><svg viewBox="0 0 12 12"><path fill="#ecc95f" d="M0 4h4l1-1h5l1 2v5l-9 2-2-1z"/><path stroke="#e9ee34" stroke-width="1.500" d="M9-1v7M6 2h7M7 0l4 4M11 0 7 4"/></svg></button>
                        <button aria-label="List view"><svg viewBox="0 0 12 12"><path fill="#eee" d="M0 0h12v12H0z"/><path stroke="#555" d="M3 2.500h6M3 4.500h6M3 6.500h6M3 8.500h6"/></svg></button>
                        <button aria-label="Detail view"><svg viewBox="0 0 12 12"><path fill="#eee" d="M0 0h12v12H0z"/><path stroke="#555" d="M2 2.500h2M5 2.500h5M2 4.500h2M5 4.500h5M2 6.500h2M5 6.500h5M2 8.500h2M5 8.500h5"/></svg></button>
                    </div>
                </div>

                <div class="dialog-main">
                    <div class="places">
                        <h2>Folder Bookmarks:</h2>
                        <div class="bookmarks">
                            <ul>
                                <li><svg viewBox="0 0 10 10"><path fill="#c9d6df" d="M0 0h10v7H0zM3 7h4v2H3z"/><path fill="#78a8cd" d="M1 1h8v5H1z"/></svg>My Computer</li>
                                <li><svg viewBox="0 0 10 10"><path fill="#1e96e8" d="M0 1h10v8H0z"/></svg>Desktop</li>
                                <li><svg viewBox="0 0 10 10"><path fill="#e9eef2" d="M1 0h6l2 2v8H1z"/><path stroke="#4a86b5" d="M3 3.500h4M3 5.500h4M3 7.500h4"/></svg>Documents</li>
                                <li><svg viewBox="0 0 10 10"><circle fill="#d8b47c" cx="4" cy="3" r="2"/><path fill="#5c9b63" d="M1 10V6l3-1 5 2v3z"/></svg>gabsh</li>
                                <li><svg viewBox="0 0 10 10"><path fill="#2f8edb" d="M3 0h4v5h3l-5 5-5-5h3z"/></svg>Downloads</li>
                                <li><svg viewBox="0 0 12 13"><use href="#yellow"/></svg>HAGO_videojuego_e</li>
                            </ul>
                            <div class="hbar"><span class="left"></span><span class="thumb"></span><span class="right"></span></div>
                        </div>
                        <span class="dots"></span>
                        <h2><label for="project">Current Project:</label></h2>
                        <span class="dd project"><select id="project"><option>default</option></select></span>
                        <ul class="folders">
                            <li><svg><use href="#bluefolder"/></svg>Workspace Root</li>
                            <li><svg><use href="#bluefolder"/></svg>scenes</li>
                            <li><svg><use href="#bluefolder"/></svg>assets</li>
                            <li><svg><use href="#bluefolder"/></svg>images</li>
                            <li><svg><use href="#bluefolder"/></svg>sourceimages</li>
                            <li><svg><use href="#bluefolder"/></svg>renderData</li>
                            <li><svg><use href="#bluefolder"/></svg>clips</li>
                            <li><svg><use href="#bluefolder"/></svg>sound</li>
                            <li><svg><use href="#bluefolder"/></svg>scripts</li>
                            <li><svg><use href="#bluefolder"/></svg>data</li>
                            <li><svg><use href="#bluefolder"/></svg>movies</li>
                            <li><svg><use href="#bluefolder"/></svg>Time Editor</li>
                            <li><svg><use href="#bluefolder"/></svg>autosave</li>
                            <li><svg><use href="#bluefolder"/></svg>sceneAssembly</li>
                        </ul>
                        <button class="btn">Set Project...</button>
                    </div>

                    <div class="files">
                        <div class="files-scroll">
                            <table>
                                <thead><tr><th>Name <span class="sort"></span></th><th>Size</th></tr></thead>
                                <tbody>
                                    <tr><td><svg><use href="#png"/></svg>ajoloteo_substance_mat_accesorios1_BaseColor.png</td><td>11.7 M</td></tr>
                                    <tr><td><svg><use href="#tx"/></svg>ajoloteo_substance_mat_accesorios1_BaseColor.tx</td><td>14.5 M</td></tr>
                                    <tr><td><svg><use href="#png"/></svg>ajoloteo_substance_mat_accesorios1_Height.png</td><td>4.8 M</td></tr>
                                    <tr><td><svg><use href="#png"/></svg>ajoloteo_substance_mat_accesorios1_Metallic.png</td><td>32 K</td></tr>
                                    <tr><td><svg><use href="#png"/></svg>ajoloteo_substance_mat_accesorios1_Normal.png</td><td>23.3 M</td></tr>
                                    <tr><td><svg><use href="#tx"/></svg>ajoloteo_substance_mat_accesorios1_Normal.tx</td><td>35.5 M</td></tr>
                                    <tr><td><svg><use href="#png"/></svg>ajoloteo_substance_mat_accesorios1_Roughness.png</td><td>3.5 M</td></tr>
                                    <tr><td><svg><use href="#png"/></svg>ajoloteo_substance_mat_cabeza1_BaseColor.png</td><td>3.4 M</td></tr>
                                    <tr><td><svg><use href="#png"/></svg>ajoloteo_substance_mat_cabeza1_Height.png</td><td>3.5 M</td></tr>
                                    <tr><td><svg><use href="#png"/></svg>ajoloteo_substance_mat_cabeza1_Metallic.png</td><td>16 K</td></tr>
                                    <tr class="selected"><td><svg><use href="#png"/></svg>ajoloteo_substance_mat_cabeza1_Normal.png</td><td>8.7 M</td></tr>
                                    <tr><td><svg><use href="#png"/></svg>ajoloteo_substance_mat_cabeza1_Roughness.png</td><td>155 K</td></tr>
                                    <tr><td><svg><use href="#tx"/></svg>ajoloteo_substance_mat_cabeza1_Roughness.tx</td><td>431 K</td></tr>
                                    <tr><td><svg><use href="#png"/></svg>ajoloteo_substance_mat_ojos1_BaseColor.png</td><td>482 K</td></tr>
                                    <tr><td><svg><use href="#tx"/></svg>ajoloteo_substance_mat_ojos1_BaseColor.tx</td><td>1,016 K</td></tr>
                                    <tr><td><svg><use href="#png"/></svg>ajoloteo_substance_mat_ojos1_Height.png</td><td>2.1 M</td></tr>
                                    <tr><td><svg><use href="#png"/></svg>ajoloteo_substance_mat_ojos1_Metallic.png</td><td>16 K</td></tr>
                                    <tr><td><svg><use href="#png"/></svg>ajoloteo_substance_mat_ojos1_Normal.png</td><td>14.2 M</td></tr>
                                    <tr><td><svg><use href="#png"/></svg>ajoloteo_substance_mat_ojos1_Roughness.png</td><td>24 K</td></tr>
                                    <tr><td><svg><use href="#tx"/></svg>ajoloteo_substance_mat_ojos1_Roughness.tx</td><td>7 K</td></tr>
                                    <tr><td><svg><use href="#png"/></svg>ajoloteo_substance_mat_ropa1_BaseColor.png</td><td>23.7 M</td></tr>
                                    <tr><td><svg><use href="#tx"/></svg>ajoloteo_substance_mat_ropa1_BaseColor.tx</td><td>25.7 M</td></tr>
                                    <tr><td><svg><use href="#png"/></svg>ajoloteo_substance_mat_ropa1_Height.png</td><td>4.0 M</td></tr>
                                    <tr><td><svg><use href="#png"/></svg>ajoloteo_substance_mat_ropa1_Metallic.png</td><td>16 K</td></tr>
                                    <tr><td><svg><use href="#tx"/></svg>ajoloteo_substance_mat_ropa1_Metallic.tx</td><td>7 K</td></tr>
                                    <tr><td><svg><use href="#png"/></svg>ajoloteo_substance_mat_ropa1_Normal.png</td><td>27.6 M</td></tr>
                                    <tr><td><svg><use href="#png"/></svg>ajoloteo_substance_mat_ropa1_Roughness.png</td><td>6.7 M</td></tr>
                                </tbody>
                            </table>
                        </div>
                        <div class="vbar"><span class="up"></span><span class="thumb"></span><span class="caret"></span></div>
                        <div class="hbar"><span class="left"></span><span class="thumb"></span><span class="right"></span></div>
                    </div>

                    <div class="preview"></div>
                </div>

                <div class="dialog-foot">
                    <label for="filename">File name:</label>
                    <input type="text" id="filename" value="ajoloteo_substance_mat_cabeza1_Normal.png">
                    <button class="btn">Open</button>
                    <label for="filetype">Files of type:</label>
                    <span class="dd"><select id="filetype"><option>Image Files</option></select></span>
                    <button class="btn">Cancel</button>
                </div>
            </div>
        </div>
    </section>

    <aside class="attrs">
        <div class="tabs" role="tablist"><button role="tab">UV Toolkit</button><button role="tab">Channel Box / Layer Editor</button><button role="tab" class="active">Attribute Editor</button></div>
        <nav class="menu"><a href="#">List</a><a href="#">Selected</a><a href="#">Focus</a><a href="#">Attributes</a><a href="#">Show</a><a href="#">Help</a></nav>
        <div class="tabs node-tabs" role="tablist"><button role="tab" class="active">file17</button><button role="tab">place2dTexture17</button></div>

        <div class="node">
            <label for="node">file:</label>
            <input type="text" id="node" value="file17">
            <div class="node-io">
                <button aria-label="Go to input"><svg><use href="#inbox"/></svg></button>
                <button aria-label="Go to output"><svg><use href="#outbox"/></svg></button>
            </div>
            <div class="node-buttons">
                <button class="btn">Focus</button>
                <button class="btn">Presets</button>
                <button class="btn half">Show</button><button class="btn half">Hide</button>
            </div>
        </div>
        <div class="sample"><span>Sample</span><span class="swatch"></span></div>

        <div class="attr-scroll">
            <div class="attr-list">
                <h3 class="open">File Attributes</h3>
                <div class="row tall"><label for="filter">Filter Type</label><span class="dd filter"><select id="filter"><option>Quadratic</option></select></span></div>
                <div class="row"><input type="checkbox" id="prefilter"><label for="prefilter">Pre Filter</label></div>
                <div class="row off"><label for="radius">Pre Filter Radius</label><input type="text" id="radius" value="2.000" disabled><input type="range" value="12" aria-label="Pre Filter Radius slider" disabled><svg class="map"><use href="#checker"/></svg></div>
                <div class="row image line"><label for="image">Image Name</label><input type="text" id="image"><button aria-label="Browse"><svg class="w"><use href="#folder"/></svg></button></div>
                <div class="row actions"><button class="btn">Reload</button><button class="btn">Edit</button><button class="btn">View</button></div>
                <div class="row tiling line"><label for="tiling">UV Tiling Mode</label><select id="tiling"><option>Off</option></select></div>
                <div class="row line"><input type="checkbox" id="seq"><label for="seq">Use Image Sequence</label></div>
                <div class="row off number"><label for="imgnum">Image Number</label><input type="text" id="imgnum" value="1" disabled><svg class="map"><use href="#checker"/></svg></div>
                <div class="row off number"><label for="offset">Frame Offset</label><input type="text" id="offset" value="0" disabled><svg class="map"><use href="#checker"/></svg></div>
                <div class="row line profile"><label for="space">Color Space</label><span class="dd space"><select id="space"><option>sRGB</option></select></span></div>
                <div class="row"><input type="checkbox" id="ignore"><label for="ignore">Ignore Color Space File Rules</label></div>
                <div class="row"><input type="checkbox" id="bot"><label for="bot">Use BOT</label></div>
                <div class="row"><input type="checkbox" id="disable"><label for="disable">Disable File Load</label></div>
                <h3>Interactive Sequence Caching Options</h3>
                <h3 class="open">Color Balance</h3>
                <div class="balance">
                    <div class="row"><label for="exposure">Exposure</label><input type="text" id="exposure" value="0.000"><input type="range" value="50" aria-label="Exposure slider"><svg class="map"><use href="#checker"/></svg></div>
                    <div class="row"><label for="defcolor">Default Color</label><span class="color grey"></span><input type="range" id="defcolor" value="50"><svg class="map"><use href="#checker"/></svg></div>
                    <div class="row"><label for="gain">Color Gain</label><span class="color light"></span><input type="range" id="gain" value="100"><svg class="map"><use href="#checker"/></svg></div>
                    <div class="row"><label for="coloroffset">Color Offset</label><span class="color dark"></span><input type="range" id="coloroffset" value="0"><svg class="map"><use href="#checker"/></svg></div>
                </div>
            </div>
            <div class="vbar"><span class="up"></span><span class="thumb"></span><span class="caret"></span></div>
        </div>
        <span class="dots"></span>
        <label class="notes-label" for="notes">Notes: &nbsp;file17</label>
        <div class="notes"><input type="text" id="notes"><span class="caret"></span></div>
        <div class="attr-foot"><button class="btn">Select</button><button class="btn">Load Attributes</button><button class="btn">Copy Tab</button></div>
    </aside>
</main>

<div class="timeline">
    <span class="grip"></span>
    <div class="ticks">
        <b>1</b>
        <span>5</span><span>10</span><span>15</span><span>20</span><span>25</span><span>30</span><span>35</span><span>40</span><span>45</span><span>50</span><span>55</span><span>60</span><span>65</span><span>70</span><span>75</span><span>80</span><span>85</span><span>90</span><span>95</span><span>100</span><span>105</span><span>110</span><span>115</span><span class="last">120</span>
    </div>
    <input type="text" value="1" aria-label="Current frame">
    <div class="play">
        <button aria-label="Go to start"><svg viewBox="0 0 20 20"><path class="w" d="M1 3h2v14H1zM11 4v12l-7-6zM19 4v12l-7-6z"/></svg></button>
        <button aria-label="Step back"><svg viewBox="0 0 20 20"><path class="w" d="M3 3h2v14H3zM16 4v12l-9-6z"/></svg></button>
        <button aria-label="Previous key"><svg viewBox="0 0 20 20"><path class="o" d="M1 1h4v18H1z"/><path class="w" d="M7 3h2v14H7zM19 4v12l-9-6z"/></svg></button>
        <button aria-label="Play backwards"><svg viewBox="0 0 20 20"><path class="w" d="M17 2v16L2 10z"/></svg></button>
        <button aria-label="Play forwards"><svg viewBox="0 0 20 20"><path class="w" d="M3 2v16l15-8z"/></svg></button>
        <button aria-label="Next key"><svg viewBox="0 0 20 20"><path class="o" d="M15 1h4v18h-4z"/><path class="w" d="M11 3h2v14h-2zM1 4v12l9-6z"/></svg></button>
        <button aria-label="Step forward"><svg viewBox="0 0 20 20"><path class="w" d="M15 3h2v14h-2zM4 4v12l9-6z"/></svg></button>
        <button aria-label="Go to end"><svg viewBox="0 0 20 20"><path class="w" d="M17 3h2v14h-2zM9 4v12l7-6zM1 4v12l7-6z"/></svg></button>
    </div>
</div>

<div class="range">
    <span class="grip"></span>
    <input type="text" value="1" aria-label="Animation start">
    <input type="text" value="1" aria-label="Playback start">
    <div class="range-track"><div class="range-bar"><i></i><span>1</span><span class="end">120</span><i></i></div></div>
    <input type="text" value="120" aria-label="Playback end">
    <input type="text" value="200" aria-label="Animation end">
    <span class="sep"></span>
    <span class="caret hollow"></span>
    <button class="box">No Character Set</button>
    <span class="caret hollow"></span>
    <button class="box">No Anim Layer</button>
    <span class="sep after"></span>
    <span class="dd fps"><select aria-label="Frame rate"><option>24 fps</option></select></span>
    <button class="tool loop" aria-label="Loop"><svg viewBox="0 0 20 20"><path class="sw" stroke-width="2" d="M3 12V6h12M17 8v6H5"/><path class="w" d="m14 2 6 4-6 4zM6 10v8l-6-4z"/></svg></button>
    <button class="tool cache" aria-label="Cached playback"><svg viewBox="0 0 20 20"><path stroke="#2fd052" stroke-width="1.500" fill="none" d="M4 1H0v18h4M16 1h4v18h-4"/><path class="o" d="M3 5h14v10H3z"/><path class="sk" d="M5 7v2M9 7v2M13 7v2M4 12h12"/></svg></button>
    <span class="sep"></span>
    <button class="tool key" aria-label="Auto key"><svg viewBox="0 0 20 20"><path class="sw" stroke-width="2" d="M17 6A8 8 0 0 0 3 6M3 14a8 8 0 0 0 14 0"/><path class="so" stroke-width="2" d="M10 5v10M4 10h12"/></svg></button>
    <button class="tool" aria-label="Animation preferences"><svg viewBox="0 0 20 20"><circle class="sw" stroke-width="1.500" cx="4" cy="4" r="3"/><circle class="o" cx="14" cy="5" r="2.500"/><path class="so" stroke-width="2.500" d="M5 9l6-1-3 6 5 2v4M11 8l3 3 5 1M8 14l-5 4"/></svg></button>
</div>

<div class="command">
    <span class="grip"></span>
    <label for="mel">MEL</label>
    <input type="text" id="mel">
    <span class="sep"></span>
    <output></output>
    <button class="tool" aria-label="Script editor"><svg viewBox="0 0 20 20"><path class="w" d="M0 0h20v20H0z"/><path class="sk" stroke-width="1.500" d="M0 4h20M7 8c-3 0 0 4-3 4 3 0 0 5 3 5M13 8c3 0 0 4 3 4-3 0 0 5-3 5M10 9v2M10 13v3"/></svg></button>
</div>

<footer><span class="grip"></span><span>Select Tool: select an object</span></footer>

<svg class="watermark" viewBox="0 0 72 90"><path d="M47 58 63 39Q67 33 62 27L48 13Q41 7 34 14L13 36Q8 42 13 48L36 77Q42 84 48 77L56 68"/></svg>

</body>
</html>
```
FILE: styles.css
```css
:root {
    --bg: #444;
    --dark: #2b2b2b;
    --groove: #373737;
    --mid: #5d5d5d;
    --text: #c4c4c4;
    --on: #5285a6;
}
*, *::before, *::after {
    box-sizing: border-box;
}
body {
    margin: 0;
    height: 100vh;
    display: flex;
    flex-direction: column;
    overflow: hidden;
    background: var(--bg);
    color: var(--text);
    font: 9px/12px "Noto Sans", "Open Sans", sans-serif;
}
button, input, select {
    font: inherit;
    color: inherit;
    margin: 0;
    padding: 0;
    border: 0;
    border-radius: 0;
    background: none;
}
button {
    display: flex;
    align-items: center;
    justify-content: center;
    flex: none;
}
a {
    color: inherit;
    text-decoration: none;
}
h2, h3 {
    margin: 0;
    font-size: 9px;
    font-weight: normal;
}
ul {
    list-style: none;
    margin: 0;
    padding: 0;
}
svg {
    display: block;
    flex: none;
    overflow: visible;
}
.defs {
    position: absolute;
    width: 0;
    height: 0;
}

/* icon colours */
.w { fill: #cacaca; }
.o { fill: #ec9a50; }
.t { fill: #4bbcc0; }
.g { fill: #58b090; }
.k { fill: #3c3c3c; }
.white { fill: #fff; }
.black { fill: #000; }
.sw, .so, .st, .sg, .sk, .sn { fill: none; }
.sw { stroke: #cacaca; }
.so { stroke: #ec9a50; }
.st { stroke: #4bbcc0; }
.sg { stroke: #58b090; }
.sk { stroke: #3c3c3c; }
.sn { stroke: #1c4a61; stroke-width: 2px; }
.on { background: var(--on); }
.dim { opacity: .3; }

/* shared bits */
.btn {
    background: var(--mid);
    color: #e2e2e2;
}
input[type="text"] {
    min-width: 0;
    padding: 0 4px;
    background: var(--dark);
    color: #ccc;
}
select {
    appearance: none;
    min-width: 0;
    width: 100%;
    padding: 0 3px;
    background: var(--mid);
    color: #ccc;
}
.dd {
    display: grid;
}
.dd select {
    grid-area: 1 / 1;
}
.dd::after {
    content: "";
    grid-area: 1 / 1;
    align-self: center;
    justify-self: end;
    width: 8px;
    margin-right: 4px;
    border: 4px solid transparent;
    border-top: 5px solid #d0d0d0;
    border-bottom-width: 0;
    pointer-events: none;
}
.caret, .up, .left, .right {
    flex: none;
    width: 8px;
    border: 4px solid transparent;
    border-top-color: #bbb;
    border-bottom-width: 0;
}
.up {
    border: 4px solid transparent;
    border-bottom-color: #bbb;
    border-top-width: 0;
}
.left, .right {
    width: 4px;
    border: 4px solid transparent;
    border-right-color: #bbb;
    border-left-width: 0;
}
.right {
    border: 4px solid transparent;
    border-left-color: #bbb;
    border-right-width: 0;
}
.grip {
    flex: none;
    align-self: stretch;
    width: 5px;
    background: radial-gradient(#777 1px, transparent 1px) 0 0 / 3px 3px;
    opacity: .6;
}
.hgrip, .dots {
    display: block;
    height: 4px;
    background: radial-gradient(#777 1px, transparent 1px) 0 0 / 3px 3px;
    opacity: .6;
}
.sep {
    flex: none;
    width: 18px;
    height: 14px;
    background: linear-gradient(#8c8c8c, #8c8c8c) center / 2px 100% no-repeat;
}
.menu {
    display: flex;
    gap: 13px;
    color: #d4d4d4;
    white-space: nowrap;
}
.tabs {
    display: flex;
    gap: 1px;
    height: 15px;
    background: var(--groove);
}
.tabs button {
    padding: 0 10px;
    color: #9c9c9c;
    background: #3a3a3a;
    white-space: nowrap;
}
.tabs .active {
    background: var(--bg);
    color: #fff;
}
.box {
    width: 83px;
    height: 17px;
    padding: 0 4px;
    justify-content: flex-start;
    border: 1px solid #3b3b3b;
    color: #ccc;
    white-space: nowrap;
}
.vbar {
    display: flex;
    flex-direction: column;
    align-items: center;
    gap: 2px;
    width: 11px;
    padding: 3px 0;
    background: #3a3a3a;
}
.vbar .thumb {
    width: 8px;
    flex: 1;
    border-radius: 3px;
    background: #686868;
}
.hbar {
    display: flex;
    align-items: center;
    gap: 4px;
    height: 12px;
    padding: 0 4px;
    background: #3a3a3a;
}
.hbar .thumb {
    height: 8px;
    border-radius: 3px;
    background: #5d5d5d;
}
.hbar .right {
    margin-left: auto;
}

/* menu bar */
.topbar {
    display: flex;
    justify-content: space-between;
    height: 18px;
    flex: none;
    padding: 0 0 0 6px;
}
.topbar .menu {
    line-height: 15px;
}
.workspace-pick {
    display: flex;
    align-items: center;
    gap: 5px;
    padding-top: 3px;
}
.workspace-pick .dd {
    width: 160px;
}
.workspace-pick select {
    height: 15px;
}

/* status line */
.status {
    display: flex;
    align-items: center;
    height: 31px;
    flex: none;
    border-bottom: 2px solid var(--groove);
}
.mode {
    width: 82px;
    margin-left: 5px;
}
.mode select {
    height: 17px;
}
.tool {
    width: 19px;
    height: 18px;
}
.tool svg {
    width: 14px;
    height: 14px;
}
.wide {
    width: 20px;
}
.status > .caret {
    margin: 0 5px;
}
.status > .small {
    margin: 0 3px;
}
.masks {
    display: flex;
    margin-right: 2px;
}
.masks .tool {
    border-right: 1px solid #35637e;
}
.signin {
    gap: 6px;
    width: 102px;
    height: 17px;
    padding: 0 4px;
    margin-left: 1px;
    background: var(--mid);
    color: #eee;
    font: bold 10px/12px Roboto, sans-serif;
}
.signin svg {
    width: 12px;
    height: 13px;
    fill: #eee;
}
.signin .caret {
    margin-left: auto;
}
.status-end {
    display: flex;
    gap: 1px;
    margin-left: auto;
}

/* shelf */
.shelf {
    display: flex;
    height: 55px;
    flex: none;
    border-bottom: 2px solid var(--groove);
}
.shelf-side {
    display: flex;
    flex-direction: column;
    align-items: center;
    justify-content: space-between;
    width: 16px;
    margin: 0 4px 4px 5px;
    padding: 10px 0 7px;
    background: #333;
}
.bar {
    width: 8px;
    height: 3px;
    background: #999;
}
.ring {
    width: 8px;
    height: 8px;
    border: 2px solid #bbb;
    border-radius: 50%;
}
.shelf-main {
    flex: 1;
    min-width: 0;
}
.shelf-main .tabs button {
    padding-top: 2px;
}
.shelf-icons {
    display: flex;
    align-items: center;
    height: 35px;
    padding-left: 3px;
}
.shelf-icons button {
    width: 29px;
    height: 30px;
}
.shelf-icons svg {
    width: 20px;
    height: 20px;
}
.divider {
    flex: none;
    width: 11px;
    height: 29px;
    background: linear-gradient(#a8a8a8, #a8a8a8) center / 2px 100% no-repeat;
}
.more {
    background: linear-gradient(135deg, transparent 50%, #ccc 50%) 25px 23px / 5px 5px no-repeat;
}
.shelf-icons .type {
    color: #ec9a50;
    font: bold 27px/28px "Liberation Serif", serif;
}
.svgtool span {
    width: 19px;
    height: 19px;
    background: #ec9a50;
    color: #333;
    font: bold 9px/16px "Noto Sans", sans-serif;
}
.shelf-icons .freeze {
    flex-direction: column;
    color: #4bbcc0;
    line-height: 10px;
}
.shelf-icons .freeze svg {
    height: 13px;
}
.shelf-icons .hist {
    flex-direction: column;
    color: #fff;
    font-weight: bold;
    font-size: 8px;
}
.shelf-icons .hist svg {
    height: 14px;
}
.hist span {
    width: 20px;
    height: 11px;
    line-height: 10px;
    background: #1c1c1c;
}
.shelf-scroll {
    display: flex;
    flex-direction: column;
    align-items: center;
    gap: 4px;
    padding: 21px 8px 0 0;
}
.dot {
    width: 8px;
    height: 8px;
    border-radius: 50%;
    background: #666;
}

main {
    display: flex;
    flex: 1;
    min-height: 0;
    padding-bottom: 3px;
}

/* tool box */
.toolbox {
    display: flex;
    flex-direction: column;
    align-items: center;
    gap: 7px;
    width: 35px;
    flex: none;
    padding: 4px 3px 2px 0;
    border-right: 1px solid #333;
}
.toolbox .hgrip {
    width: 30px;
    margin-bottom: -5px;
}
.toolbox button {
    width: 30px;
    height: 24px;
}
.toolbox .on {
    height: 30px;
    margin-bottom: -3px;
}
.toolbox svg {
    width: 23px;
    height: 23px;
}
.toolbox .on svg {
    width: 19px;
    height: 19px;
}
.toolbox hr {
    width: 30px;
    height: 2px;
    margin: 63px 0 -2px;
    border: 0;
    background: #8c8c8c;
}
.toolbox .logo {
    width: 27px;
    height: 26px;
    margin-top: auto;
}

/* viewport panel */
.panel {
    position: relative;
    display: flex;
    flex-direction: column;
    flex: 1;
    min-width: 0;
    margin: 2px 5px 0 4px;
    border: 1px solid #7b7b7b;
    padding: 0 1px 1px 2px;
}
.panel-menu {
    gap: 14px;
    padding: 3px 5px 0;
}
.panel-bar {
    display: flex;
    align-items: center;
    height: 19px;
}
.panel-bar .sep {
    width: 9px;
    height: 11px;
}
.panel-bar button {
    width: 16px;
    height: 15px;
}
.panel-bar svg {
    width: 11px;
    height: 11px;
}
.panel-bar input {
    width: 31px;
    height: 13px;
    margin-right: 2px;
}
.on-badge {
    width: 13px;
    height: 13px;
    border-radius: 50%;
    background: #4bbcc0;
    color: #174f58;
    font-size: 6px;
    font-weight: bold;
}
.gamma {
    width: 137px;
}
.gamma select {
    height: 15px;
}
.viewport {
    display: flex;
    align-items: flex-end;
    justify-content: center;
    flex: 1;
    position: relative;
    padding-right: 14px;
    background: #a1a1a1;
}
.axis {
    position: absolute;
    left: 17px;
    bottom: 16px;
    width: 20px;
    height: 24px;
}
.cam {
    margin-bottom: 4px;
    color: #fff;
    font: bold 9px/12px "Open Sans", sans-serif;
    text-shadow: 1px 1px 1px #555;
}

/* file dialog */
.dialog {
    position: absolute;
    left: 326px;
    right: 5px;
    top: 49px;
    border: 1px solid #2d5c83;
    background: var(--bg);
    box-shadow: 0 0 3px #68788a;
}
.titlebar {
    display: flex;
    align-items: center;
    height: 26px;
    padding: 0 14px 0 6px;
    background: #0063b1;
    color: #fff;
}
.titlebar span {
    flex: 1;
    padding-left: 5px;
}
.titlebar svg {
    width: 13px;
    height: 13px;
}
.titlebar button {
    width: 10px;
}
.titlebar button svg {
    width: 9px;
    height: 9px;
}
.titlebar .help {
    margin-right: 28px;
    font-weight: bold;
    font-size: 10px;
}
.dialog-body {
    padding: 9px;
}
.lookin {
    display: flex;
    align-items: center;
    height: 19px;
}
.lookin label {
    width: 60px;
}
.path {
    display: flex;
    align-items: center;
    flex: 1;
    height: 17px;
    padding-left: 5px;
    background: var(--dark);
}
.path svg {
    width: 11px;
    height: 13px;
}
.path .dd {
    flex: 1;
}
.path select {
    height: 17px;
    padding-left: 4px;
    background: linear-gradient(90deg, transparent calc(100% - 12px), var(--mid) 0);
}
.path .dd::after {
    margin-right: 2px;
}
.look-tools {
    display: flex;
    gap: 10px;
    margin: 0 2px 0 8px;
}
.look-tools svg {
    width: 12px;
    height: 12px;
}
.dialog-main {
    display: flex;
    height: 386px;
    margin-top: 5px;
}
.places {
    display: flex;
    flex-direction: column;
    width: 103px;
}
.bookmarks {
    margin-top: 4px;
    padding-top: 2px;
    background: var(--dark);
}
.places li {
    display: flex;
    align-items: center;
    gap: 3px;
    height: 11px;
    padding-left: 3px;
    overflow: hidden;
    color: #d0d0d0;
    white-space: nowrap;
}
.places li svg {
    width: 9px;
    height: 9px;
}
.bookmarks .hbar {
    height: 13px;
    margin-top: 3px;
}
.bookmarks .thumb {
    width: 59px;
}
.places .dots {
    width: 36px;
    margin: 1px auto;
}
.project {
    margin: 3px 0 5px;
}
.project select {
    height: 19px;
}
.folders {
    flex: 1;
    padding-top: 3px;
    background: var(--dark);
}
.places .btn {
    height: 20px;
    margin-top: 7px;
}
.files {
    display: grid;
    grid-template: 1fr 12px / 1fr 11px;
    width: 336px;
    margin-left: 7px;
    border: 1px solid #54809c;
    padding: 1px 0 0 1px;
    background: #3a3a3a;
}
.files-scroll {
    min-height: 0;
    overflow: hidden;
    background: var(--dark);
}
.files table {
    width: 100%;
    height: 381px;
    border-collapse: collapse;
    color: #d0d0d0;
}
.files th {
    height: 20px;
    padding: 0 3px;
    background: var(--mid);
    color: #ddd;
    font-weight: normal;
    text-align: left;
}
.files th:first-child {
    padding-left: 18px;
    border-right: 1px solid #3a3a3a;
}
.sort {
    float: right;
    margin: 4px 6px 0 0;
    border: 3px solid transparent;
    border-bottom: 5px solid #888;
    border-top-width: 0;
}
.files td {
    padding: 0;
    line-height: 13px;
    white-space: nowrap;
}
.files td svg {
    float: left;
    width: 10px;
    height: 13px;
    margin: 0 3px 0 2px;
}
.files td:last-child {
    text-align: right;
}
.files .selected {
    background: var(--on);
    color: #fff;
}
.files .hbar .thumb {
    width: 215px;
}
.files .vbar .thumb {
    flex: 0 0 340px;
}
.files .vbar .caret {
    margin-top: auto;
}
.preview {
    flex: 1;
    margin: 18px 7px 19px 13px;
    background: #8080ff;
}
.dialog-foot {
    display: grid;
    grid-template-columns: 60px 1fr 73px;
    align-items: center;
    row-gap: 6px;
    margin-top: 10px;
}
.dialog-foot input {
    height: 15px;
    padding: 0 2px;
}
.dialog-foot select {
    height: 18px;
}
.dialog-foot .btn {
    width: 64px;
    height: 20px;
    margin-left: 9px;
}

/* attribute editor */
.attrs {
    display: flex;
    flex-direction: column;
    width: 388px;
    flex: none;
    padding-top: 1px;
}
.attrs > .tabs:first-child {
    height: 16px;
}
.attrs > .menu {
    gap: 13px;
    padding: 3px 7px 0;
}
.node-tabs {
    margin: 14px 7px 0 5px;
    padding-left: 2px;
}
.node-tabs button:first-child {
    padding: 0 9px;
}
.node {
    display: flex;
    align-items: center;
    height: 54px;
    margin-top: 8px;
}
.node label {
    width: 126px;
    text-align: right;
}
.node input {
    width: 128px;
    height: 18px;
    margin-left: 5px;
}
.node-io {
    display: flex;
    flex-direction: column;
    gap: 6px;
    margin: 0 10px 0 11px;
}
.node-io svg {
    width: 14px;
    height: 12px;
}
.node-buttons {
    display: flex;
    flex-wrap: wrap;
    gap: 1px;
    width: 61px;
}
.node-buttons .btn {
    width: 59px;
    height: 18px;
}
.node-buttons .half {
    width: 30px;
    height: 17px;
}
.sample {
    display: flex;
    align-items: center;
    margin-top: 11px;
}
.sample span:first-child {
    width: 129px;
    text-align: right;
}
.swatch {
    width: 53px;
    height: 53px;
    margin-left: 5px;
    background: #000;
}
.attr-scroll {
    display: flex;
    flex: 1;
    min-height: 0;
    margin: 8px 8px 0 9px;
}
.attr-list {
    flex: 1;
    overflow: hidden;
    background: #494949;
}
.attrs h3 {
    display: flex;
    align-items: center;
    height: 17px;
    margin-bottom: 1px;
    padding-left: 7px;
    background: var(--mid);
    border-radius: 2px;
    color: #ccc;
    font: bold 9px/12px "Open Sans", sans-serif;
}
.attrs h3::before {
    content: "";
    width: 6px;
    margin-right: 15px;
    border: 5px solid transparent;
    border-left: 6px solid #eee;
    border-right-width: 0;
}
.attrs h3.open::before {
    width: 10px;
    margin-right: 11px;
    border: 5px solid transparent;
    border-top: 6px solid #eee;
    border-bottom-width: 0;
}
.row {
    display: flex;
    align-items: center;
    min-height: 16px;
}
.row > label:first-child {
    width: 121px;
    margin-right: 7px;
    text-align: right;
}
.row.tall {
    height: 20px;
}
.row.line {
    border-top: 1px solid #404040;
}
.row.off {
    height: 18px;
    color: #7c7c7c;
}
.row input[type="text"] {
    width: 56px;
    height: 15px;
}
.row.off input[type="text"] {
    background: #404040;
    color: #6c6c6c;
}
input[type="checkbox"] {
    appearance: none;
    width: 11px;
    height: 11px;
    margin: 0 4px 0 128px;
    background: var(--dark);
}
input[type="range"] {
    appearance: none;
    width: 140px;
    height: 12px;
    margin: 0 7px 0 3px;
    background: linear-gradient(var(--dark), var(--dark)) center / 100% 2px no-repeat;
}
input[type="range"]::-webkit-slider-thumb {
    appearance: none;
    width: 6px;
    height: 12px;
    border-radius: 1px;
    background: #bdbdbd;
}
.off input[type="range"] {
    opacity: .5;
}
.map {
    width: 10px;
    height: 10px;
}
.off .map {
    opacity: .3;
}
.number .map {
    margin-left: 79px;
}
.filter {
    width: 79px;
}
.filter select, .space select, .tiling select {
    height: 17px;
}
.space {
    width: 176px;
}
.space select {
    color: #fff;
}
.row.image {
    height: 27px;
}
.row.image input {
    width: 202px;
    margin-right: 5px;
}
.row.image svg {
    width: 14px;
    height: 14px;
}
.actions {
    gap: 1px;
    height: 26px;
    padding-left: 128px;
    align-items: flex-start;
}
.actions .btn {
    width: 59px;
    height: 23px;
}
.row.tiling {
    height: 23px;
}
.tiling select {
    width: 102px;
}
.row.profile {
    height: 25px;
}
.balance {
    padding-top: 2px;
}
.balance .row {
    height: 17px;
}
.color {
    width: 56px;
    height: 11px;
}
.grey { background: #bbb; }
.light { background: #fff; }
.dark { background: #000; }
.attr-scroll .thumb {
    flex: 0 0 237px;
}
.attr-scroll .vbar .caret {
    margin-top: auto;
}
.attrs > .dots {
    width: 125px;
    height: 3px;
    margin: 3px 0 3px 130px;
}
.notes-label {
    padding-left: 12px;
    font: bold 9px/12px "Open Sans", sans-serif;
}
.notes {
    display: flex;
    align-items: center;
    margin: 1px 9px 3px 4px;
    padding-right: 2px;
    background: var(--dark);
}
.notes input {
    flex: 1;
    height: 10px;
}
.attr-foot {
    display: flex;
    gap: 1px;
    margin-right: 3px;
    font: bold 9px/12px "Open Sans", sans-serif;
}
.attr-foot .btn {
    flex: 1;
    height: 23px;
}

/* time controls */
.timeline, .range, .command, footer {
    display: flex;
    align-items: center;
    flex: none;
    border-top: 2px solid #3a3a3a;
}
.timeline {
    height: 33px;
}
.ticks {
    display: flex;
    flex: 1;
    height: 23px;
    margin: 0 6px 0 4px;
    background: var(--dark);
    color: #888;
    line-height: 10px;
}
.ticks b {
    width: 9px;
    margin: 0 34px 0 7px;
    padding-top: 12px;
    background: #555;
    color: #fff;
    font-weight: normal;
    text-align: center;
}
.ticks span {
    flex: 1;
    min-width: 0;
    padding-left: 2px;
    background: linear-gradient(#888, #888) left bottom / 2px 12px no-repeat;
}
.ticks .last {
    flex: 0 0 18px;
    padding-left: 1px;
}
.timeline > input {
    width: 73px;
    height: 15px;
}
.play {
    display: flex;
    margin: 0 8px 0 5px;
}
.play button {
    width: 19px;
}
.play svg {
    width: 15px;
    height: 15px;
}
.range {
    height: 32px;
    padding: 0 7px 3px 0;
}
.range > input {
    width: 74px;
    height: 20px;
    margin-left: 5px;
}
.range-track {
    flex: 1;
    height: 19px;
    margin-left: 8px;
    padding: 1px 2px;
    background: var(--groove);
}
.range-bar {
    display: flex;
    align-items: center;
    gap: 3px;
    width: 61%;
    height: 17px;
    padding: 0 4px;
    border-radius: 2px;
    background: var(--mid);
    color: #ddd;
}
.range-bar i {
    width: 12px;
    height: 12px;
    border-radius: 3px;
    background: #999;
}
.range-bar .end {
    margin-left: auto;
}
.range .box {
    width: 85px;
}
.range > .sep {
    width: 8px;
}
.range > .after {
    width: 22px;
}
.range > .caret {
    margin: 0 4px 0 10px;
    opacity: .7;
}
.fps {
    width: 80px;
}
.fps select {
    height: 17px;
}
.range .loop {
    margin: 0 5px 0 8px;
}
.cache svg {
    width: 20px;
    height: 18px;
}
.range .key {
    margin: 0 5px 0 9px;
}
.command {
    height: 26px;
    padding-right: 5px;
}
.command label {
    width: 43px;
    padding-left: 13px;
    color: #ddd;
}
.command input {
    flex: 546;
    height: 18px;
}
.command .sep {
    width: 7px;
    opacity: .4;
}
.command output {
    flex: 971;
    height: 19px;
    margin-right: 3px;
    background: var(--dark);
}
.command .tool svg {
    width: 16px;
    height: 16px;
}
footer {
    height: 22px;
}
footer span:last-child {
    padding-left: 13px;
    color: #aaa;
}
.watermark {
    position: absolute;
    right: 209px;
    bottom: 8px;
    width: 72px;
    height: 90px;
    fill: none;
    stroke: #8a9a40;
    stroke-width: 14;
    opacity: .22;
    pointer-events: none;
}
```
